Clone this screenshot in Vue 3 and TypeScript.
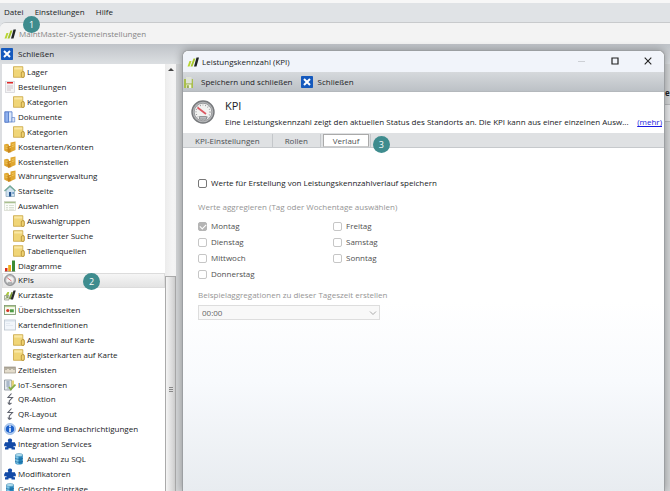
<script setup lang="ts">
import { ref } from 'vue'

interface Node {
  label: string
  icon: string
  child?: boolean
}

const nodes: Node[] = [
  { label: 'Lager', icon: 'folder', child: true },
  { label: 'Bestellungen', icon: 'order' },
  { label: 'Kategorien', icon: 'folder', child: true },
  { label: 'Dokumente', icon: 'docs' },
  { label: 'Kategorien', icon: 'folder', child: true },
  { label: 'Kostenarten/Konten', icon: 'coins' },
  { label: 'Kostenstellen', icon: 'coins' },
  { label: 'Währungsverwaltung', icon: 'coins' },
  { label: 'Startseite', icon: 'home' },
  { label: 'Auswahlen', icon: 'list' },
  { label: 'Auswahlgruppen', icon: 'folder', child: true },
  { label: 'Erweiterter Suche', icon: 'folder', child: true },
  { label: 'Tabellenquellen', icon: 'folder', child: true },
  { label: 'Diagramme', icon: 'chart' },
  { label: 'KPIs', icon: 'gauge' },
  { label: 'Kurztaste', icon: 'shortcut' },
  { label: 'Übersichtsseiten', icon: 'overview' },
  { label: 'Kartendefinitionen', icon: 'card' },
  { label: 'Auswahl auf Karte', icon: 'folder', child: true },
  { label: 'Registerkarten auf Karte', icon: 'folder', child: true },
  { label: 'Zeitleisten', icon: 'timeline' },
  { label: 'IoT-Sensoren', icon: 'sensor' },
  { label: 'QR-Aktion', icon: 'bolt' },
  { label: 'QR-Layout', icon: 'bolt' },
  { label: 'Alarme und Benachrichtigungen', icon: 'alarm' },
  { label: 'Integration Services', icon: 'puzzle' },
  { label: 'Auswahl zu SQL', icon: 'database', child: true },
  { label: 'Modifikatoren', icon: 'puzzle' },
  { label: 'Gelöschte Einträge', icon: 'database' },
]

const selected = ref('KPIs')
const tabs = ['KPI-Einstellungen', 'Rollen', 'Verlauf']
const activeTab = ref('Verlauf')
const saveHistory = ref(false)
const time = ref('00:00')
const days = ['Montag', 'Dienstag', 'Mittwoch', 'Donnerstag', 'Freitag', 'Samstag', 'Sonntag']
</script>

<template>
  <div class="app">
    <svg class="defs" aria-hidden="true">
      <symbol id="i-folder" viewBox="0 0 12 12">
        <path d="M.5.7h9.300v4.800h1v5.800H.5z" fill="#f0d577" stroke="#c8a443" stroke-width=".8" />
        <path d="M1.200 1.400h8v2.200h-8z" fill="#f9e7a5" />
        <rect x="8.300" y="5.700" width="3" height="5.700" rx="1.200" fill="#efd271" stroke="#b08c34" stroke-width=".8" />
      </symbol>
      <symbol id="i-order" viewBox="0 0 12 12">
        <rect x="1.500" y=".5" width="9" height="11" fill="#f4f4f5" stroke="#d0d0d4" stroke-width=".7" />
        <path d="M3 1.800h6" stroke="#e02828" stroke-width="1.600" />
        <path d="M3 5h6M3 7h6M3 9h4" stroke="#c9b9be" stroke-width=".8" />
      </symbol>
      <symbol id="i-docs" viewBox="0 0 12 12">
        <path d="M.8.8h3.700v10.500H.8z" fill="#8fb1ee" stroke="#3c66bd" stroke-width=".8" />
        <path d="M4.500.8H8V11H4.500z" fill="#dce8fb" stroke="#4f78c8" stroke-width=".8" />
        <path d="M8 6.500h2.700v4.500H8z" fill="#dbe5f9" stroke="#6488cc" stroke-width=".7" />
      </symbol>
      <symbol id="i-coins" viewBox="0 0 12 12">
        <path d="M.2 3.500l3-.7 1.800 1v6L3 11 .2 9.500z" fill="#dfa52c" />
        <path d="M3.500 5.500L7.500 4.500V11L4.500 12l-1-1z" fill="#c9871c" />
        <path d="M6.500 1.500L11.500.5v8.500L8 10.500H6.500z" fill="#e0a730" />
        <path d="M1.200 5l2.300.4M1.200 7l2.300.4M8 3.500l2.500-.7M8 5.500l2.500-.7M5 7l2-.6" stroke="#f6d675" stroke-width=".7" />
      </symbol>
      <symbol id="i-home" viewBox="0 0 12 12">
        <path d="M2 5v6.500h8.500V5L6 1.500z" fill="#cfe2ef" stroke="#7899ae" stroke-width=".6" />
        <path d="M.5 6L6 1l5.500 5" fill="none" stroke="#74a999" stroke-width="1.400" />
        <path d="M5 7h2.200v4.500H5z" fill="#24538d" /><path d="M8.500 7h1.200v2H8.500z" fill="#4b83bb" />
      </symbol>
      <symbol id="i-list" viewBox="0 0 12 12">
        <rect x=".5" y="1.500" width="11" height="9" fill="#fbfcf8" stroke="#d2d6cb" stroke-width=".7" />
        <path d="M.5 2.500h11" stroke="#a9c08f" stroke-width="1.600" />
        <path d="M2 5.500h2M2 7.500h2M2 9.200h2M5 5.500h5M5 7.500h5M5 9.200h5" stroke="#cfd8c8" stroke-width=".8" />
      </symbol>
      <symbol id="i-chart" viewBox="0 0 12 12">
        <path d="M1 8h2.500v3.500H1z" fill="#d82d1a" /><path d="M4.200 5H7v6.500H4.200z" fill="#efab19" />
        <path d="M8 .5h3v11H8z" fill="#3c8b35" /><path d="M.5 11.600h11" stroke="#777" stroke-width=".5" />
      </symbol>
      <symbol id="i-gauge" viewBox="0 0 24 24">
        <circle cx="12" cy="12" r="11" fill="#b4b6b8" stroke="#77797c" stroke-width="1.400" />
        <circle cx="12" cy="12" r="8.800" fill="#f2f2f1" stroke="#8b8d90" stroke-width=".8" />
        <circle cx="12" cy="12" r="7" fill="none" stroke="#7c7f82" stroke-dasharray=".7 2" stroke-width="1.200" />
        <path d="M6.500 7.500l8.500 6.500" stroke="#dc5962" stroke-width="1.700" />
        <path d="M8.500 16.500h7v2.700h-7z" fill="#b9bcbf" stroke="#75787b" stroke-width=".7" />
      </symbol>
      <symbol id="i-shortcut" viewBox="0 0 12 12">
        <path d="M1 7L3.500 3h1.700L4 8z" fill="#a9c83c" /><path d="M4.500 10L7.500 3h1.200L7 10z" fill="#7c9c35" />
        <path d="M6.500 10.500L9.500 1.500h2.300L9 10.500z" fill="#292c2d" />
        <path d="M.5 6.500h4.500V11H.5z" fill="#e5ead9" stroke="#8c9284" stroke-width=".7" />
        <path d="M1.700 9.800L3.700 7.700M2.200 7.700h1.500v1.500" fill="none" stroke="#67883c" stroke-width=".8" />
      </symbol>
      <symbol id="i-overview" viewBox="0 0 12 12">
        <rect x=".5" y="1.500" width="11" height="9" fill="#f8fbef" stroke="#829c73" stroke-width=".9" />
        <path d="M1 2.500h10" stroke="#b4cc92" stroke-width="1.200" />
        <circle cx="3.800" cy="6.500" r="1.600" fill="#d33325" /><path d="M6 5.300h3.800v3H6z" fill="#4e9d45" />
      </symbol>
      <symbol id="i-card" viewBox="0 0 12 12">
        <rect x=".5" y="1" width="11" height="10" fill="#f2f6fb" stroke="#b9c3cd" stroke-width=".8" />
        <path d="M1 2h10" stroke="#d4dfea" /><path d="M2 4.500h4M2 6.500h7" stroke="#dce4ed" stroke-width=".7" />
      </symbol>
      <symbol id="i-timeline" viewBox="0 0 12 12">
        <rect x=".4" y="3" width="11.200" height="6" fill="#e4ddcd" stroke="#9c9487" stroke-width=".7" />
        <path d="M2 3v3M4 3v2M6 3v3M8 3v2M10 3v3" stroke="#665f55" stroke-width=".7" />
      </symbol>
      <symbol id="i-sensor" viewBox="0 0 12 12">
        <path d="M.5 1h7v10h-7z" fill="#e4e8ed" stroke="#77838e" stroke-width=".7" />
        <path d="M2 3h4M2 5h4M2 7h4M4 2v8" stroke="#8095b0" stroke-width=".7" />
        <path d="M7.500 1.500H10V8H7.500z" fill="#e3d375" /><path d="M5 8l1.800 2.400L11.500 5.500" fill="none" stroke="#83ad45" stroke-width="1.800" />
      </symbol>
      <symbol id="i-bolt" viewBox="0 0 12 12">
        <path d="M7.500.5L4 4.500h4.500L5.300 8v3.300M5.300 11.500L3.800 9.500M5.300 11.500l2.200-1.500" fill="none" stroke="#5e626d" stroke-width="1.100" />
      </symbol>
      <symbol id="i-alarm" viewBox="0 0 12 12">
        <circle cx="6" cy="6" r="5.500" fill="#bad3f3" stroke="#88aee0" stroke-width=".7" />
        <ellipse cx="6" cy="6" rx="4.200" ry="3.800" fill="#1c60cb" />
        <path d="M6 2.500v1.500M6 4.800v4.200" stroke="#fff" stroke-width="1.500" />
      </symbol>
      <symbol id="i-puzzle" viewBox="0 0 12 12">
        <path d="M1 4.200h3.200V3.400C3.200 2 4.200.5 6 .5s2.800 1.500 1.800 2.900v.8H11v1.300h.8v2.700H9.500v1H11v2.300H7.500v-1.300h-3v1.300H1V9.200h1.500v-1H.2V5.500H1z" fill="#124aa7" />
      </symbol>
      <symbol id="i-database" viewBox="0 0 12 12">
        <path d="M2.300 2v8c0 2 7.500 2 7.500 0V2z" fill="#2685bd" /><path d="M3 3v7c.5.800 1.500 1 2.500 1V3z" fill="#7ec7e8" />
        <ellipse cx="6.050" cy="2" rx="3.750" ry="1.500" fill="#b2dff1" stroke="#3b83ab" stroke-width=".5" />
        <path d="M2.300 5c0 1.600 7.500 1.600 7.500 0M2.300 8c0 1.600 7.500 1.600 7.500 0" fill="none" stroke="#155c8d" stroke-width=".7" />
      </symbol>
      <symbol id="i-logo" viewBox="0 0 12 12">
        <path d="M.5 10.500L2.500 5h2l-2 5.500z" fill="#b8d532" /><path d="M3.500 10.500L6.500 2.500h2l-3 8z" fill="#a6c52c" />
        <path d="M7 10.500L9.500 1.500H12L9.500 10.500z" fill="#202426" />
      </symbol>
      <symbol id="i-close" viewBox="0 0 12 12">
        <rect width="12" height="12" rx=".8" fill="#1559bd" />
        <path d="M3 3l6 6M9 3L3 9" stroke="#fff" stroke-width="2" />
      </symbol>
      <symbol id="i-save" viewBox="0 0 12 12">
        <path d="M0 3h2v4.500h5.500V3H9v9H0z" fill="#a9bf4c" /><path d="M2 1h5.500v6H2z" fill="#dfe3d6" />
        <path d="M2.300 8.500h5V12h-5z" fill="#eff3db" /><path d="M3.200 9.300h1.500V12H3.200z" fill="#819a38" />
      </symbol>
    </svg>

    <nav class="menu">
      <button type="button">Datei<span class="badge one">1</span></button>
      <button type="button">Einstellungen</button>
      <button type="button">Hilfe</button>
    </nav>

    <section class="settings">
      <header class="title muted"><svg class="icon"><use href="#i-logo" /></svg><span>MaintMaster-Systemeinstellungen</span></header>
      <div class="toolbar main-tools">
        <button type="button"><svg class="icon"><use href="#i-close" /></svg>Schließen</button>
      </div>
      <div class="body">
        <div class="tree">
          <button
            v-for="(n, i) in nodes" :key="i" type="button" class="node"
            :class="{ child: n.child, selected: n.label === selected }" @click="selected = n.label"
          >
            <svg class="icon"><use :href="'#i-' + n.icon" /></svg>{{ n.label }}
            <span v-if="n.label === 'KPIs'" class="badge two">2</span>
          </button>
        </div>
        <div class="scroll"><span class="arrow"></span><span class="thumb"><i class="grip"></i></span></div>
        <div class="behind"><span class="cut">e</span><span class="line"></span></div>
      </div>
    </section>

    <section class="dialog">
      <header class="title">
        <svg class="icon"><use href="#i-logo" /></svg><span>Leistungskennzahl (KPI)</span>
        <div class="controls">
          <button type="button" aria-label="Minimieren" disabled><svg viewBox="0 0 8 8"><path d="M0 4.500h7" stroke="#cdd0d5" /></svg></button>
          <button type="button" aria-label="Maximieren"><svg viewBox="0 0 8 8"><path d="M1 1h6v6H1z" fill="none" stroke="#222" stroke-width="1.200" /></svg></button>
          <button type="button" aria-label="Fenster schließen"><svg viewBox="0 0 8 8"><path d="M.7.7l6.600 6.600M7.300.7L.7 7.300" stroke="#222" stroke-width="1.100" /></svg></button>
        </div>
      </header>
      <div class="toolbar">
        <button type="button"><svg class="icon"><use href="#i-save" /></svg>Speichern und schließen</button>
        <button type="button"><svg class="icon"><use href="#i-close" /></svg>Schließen</button>
      </div>
      <div class="intro">
        <svg class="gauge"><use href="#i-gauge" /></svg>
        <div class="about">
          <h1>KPI</h1>
          <div class="desc">
            <p>Eine Leistungskennzahl zeigt den aktuellen Status des Standorts an. Die KPI kann aus einer einzelnen Ausw...</p>
            <a href="#">(mehr)</a>
          </div>
        </div>
      </div>
      <div class="tabs" role="tablist">
        <button
          v-for="t in tabs" :key="t" type="button" role="tab" :aria-selected="t === activeTab"
          :class="{ active: t === activeTab }" @click="activeTab = t"
        >{{ t }}<span v-if="t === 'Verlauf'" class="badge three">3</span></button>
        <span class="tab-end"></span>
      </div>
      <form class="panel" @submit.prevent>
        <label class="check"><input v-model="saveHistory" type="checkbox">Werte für Erstellung von Leistungskennzahlverlauf speichern</label>
        <fieldset :disabled="!saveHistory">
          <legend>Werte aggregieren (Tag oder Wochentage auswählen)</legend>
          <div class="days">
            <label v-for="(d, i) in days" :key="d" class="check"><input type="checkbox" :checked="i === 0">{{ d }}</label>
          </div>
          <label class="caption" for="time">Beispielaggregationen zu dieser Tageszeit erstellen</label>
          <div class="select">
            <select id="time" v-model="time"><option>00:00</option></select>
            <svg viewBox="0 0 8 8"><path d="M1 2.500l3 3 3-3" fill="none" stroke="#aaa" /></svg>
          </div>
        </fieldset>
      </form>
    </section>
  </div>
</template>

<style>
body { margin: 0; overflow: hidden; }
</style>

<style scoped>
* { box-sizing: border-box; }
.app {
  position: relative;
  display: flex;
  flex-direction: column;
  height: 100vh;
  overflow: hidden;
  background: #dfe2e5;
  color: #202225;
  font: 8px/12px "Open Sans", "Noto Sans", sans-serif;
}
button { font: inherit; color: inherit; border: 0; padding: 0; background: none; }
.defs { position: absolute; width: 0; height: 0; }
.icon { width: 12px; height: 12px; flex: none; }
.menu {
  display: flex;
  gap: 11px;
  height: 22px;
  flex: none;
  border-top: 3px solid #f7f7f7;
  padding: 1px 4px 0;
  background: #e0e3e6;
}
.menu button { position: relative; height: 16px; }
.badge {
  position: absolute;
  z-index: 5;
  display: grid;
  place-items: center;
  width: 17px;
  height: 17px;
  border-radius: 50%;
  background: #3e8c8e;
  color: #fff;
  font-size: 9px;
}
.one { left: 19px; top: 12px; }
.two { left: 81px; top: 0; }
.three { left: 49px; top: 1px; }
.settings { display: flex; flex: 1; flex-direction: column; min-height: 0; border-top: 1px solid #c8cacc; border-radius: 6px 0 0; overflow: hidden; }
.title { display: flex; align-items: center; gap: 3px; height: 21px; flex: none; padding-left: 4px; background: #f1f4fa; }
.muted { background: #f3f3f3; color: #858585; }
.toolbar { display: flex; align-items: center; gap: 8px; height: 20px; flex: none; background: linear-gradient(#d6d9dc, #bcc1c6); border-bottom: 1px solid #b4b8bc; }
.toolbar button { display: flex; align-items: center; gap: 5px; }
.main-tools { padding-left: 1px; background: linear-gradient(#bfc3c8, #dcdfe2); border: 0; }
.body { display: flex; flex: 1; min-height: 0; background: #dcdee1; padding-left: 2px; }
.tree { display: grid; grid-auto-rows: 1fr; width: 163px; margin-bottom: -5px; padding-top: 1px; background: #fff; }
.node { position: relative; display: flex; align-items: center; gap: 2px; min-height: 0; padding-left: 2px; text-align: left; white-space: nowrap; }
.child { padding-left: 11px; }
.selected { background: linear-gradient(#f7f7f7, #e2e2e2); box-shadow: inset 0 0 0 1px #dcdcdc; }
.scroll { display: flex; flex-direction: column; width: 11px; background: linear-gradient(90deg, #ececec, #f8f8f8); }
.arrow { align-self: center; margin-top: 4px; border: 3px solid transparent; border-top: 0; border-bottom-color: #444; }
.thumb { display: flex; justify-content: center; flex: 1; margin-top: 205px; padding-top: 110px; background: linear-gradient(90deg, #f4f4f4, #cfcfcf); border: 1px solid #aaa; border-bottom: 0; }
.grip { width: 4px; height: 5px; background: repeating-linear-gradient(#888 0 1px, #ddd 1px 2px); }
.behind { display: flex; flex: 1; flex-direction: column; align-items: flex-end; padding-top: 23px; background: #d3d5d7; }
.cut { width: 5px; font-weight: 700; }
.line { width: 5px; height: 18px; margin-top: 5px; border: solid #b8babc; border-width: 1px 0; background: #e6e7e9; }
.dialog {
  position: absolute;
  inset: 50px 5px 0 182px;
  display: flex;
  flex-direction: column;
  border: 1px solid #9c9fa2;
  border-bottom: 0;
  border-radius: 6px 6px 0 0;
  background: #fff;
  box-shadow: 0 0 8px #0005;
}
.dialog > .title { border-radius: 6px 6px 0 0; }
.dialog > .toolbar { padding-left: 1px; }
.controls { display: flex; margin-left: auto; }
.controls button { width: 33px; height: 21px; }
.controls svg { width: 8px; height: 8px; }
.intro { display: flex; gap: 10px; height: 41px; flex: none; padding: 8px 2px 0 8px; }
.gauge { width: 24px; height: 24px; flex: none; }
.about { flex: 1; min-width: 0; }
h1 { margin: 0; font-size: 11px; line-height: 12px; font-weight: 400; }
.desc { display: flex; justify-content: space-between; gap: 4px; margin-top: 4px; }
p { margin: 0; white-space: nowrap; }
a { color: #1919e0; }
.tabs { display: flex; height: 15px; flex: none; padding-top: 1px; background: #dfe1e3; border-bottom: 1px solid #c6c9cc; color: #4c4f53; }
.tabs button { position: relative; padding: 0 12px; border-right: 1px solid #c4c7ca; }
.tabs .active { background: #fff; border: 1px solid #aaa; border-bottom-color: #ccc; margin-left: 2px; padding: 0 9px; }
.tab-end { width: 2px; border-right: 1px solid #c4c7ca; }
.panel { flex: 1; padding: 29px 15px; background: linear-gradient(#fff 45%, #f8fafd 68%, #e8ecf0); }
.check { display: flex; align-items: center; gap: 4px; }
input { appearance: none; width: 9px; height: 9px; margin: 0; border: 1px solid #777; border-radius: 2px; background: #fff; }
fieldset { border: 0; margin: 12px 0 0; padding: 0; color: #505050; }
fieldset input { border-color: #c6c6c6; }
input:checked { border-color: #b5b5b5; background: #b5b5b5; display: grid; place-items: center; }
input:checked::after { content: ""; width: 5px; height: 3px; border: solid #fff; border-width: 0 0 1px 1px; rotate: -45deg; }
legend, .caption { padding: 0; color: #959595; }
.days { display: grid; grid-template: repeat(4, 16px) / repeat(2, 135px); grid-auto-flow: column; margin: 5px 0 7px; }
.select { position: relative; width: 182px; margin-top: 4px; }
select { display: block; width: 100%; height: 15px; appearance: none; padding: 0 3px; border: 1px solid #ddd; border-radius: 0; background: #f8f8f8; color: #666; font: inherit; opacity: 1; }
.select svg { position: absolute; right: 3px; top: 4px; width: 8px; height: 8px; }
</style>
